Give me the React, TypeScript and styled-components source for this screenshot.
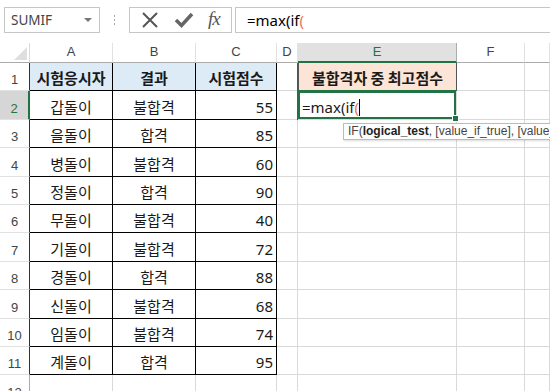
import React from 'react';
import styled, { createGlobalStyle, css } from 'styled-components';

const GREEN = '#217346';
const GRID = '#d9d9d9';

const GlobalStyle = createGlobalStyle`
  html, body {
    margin: 0;
    padding: 0;
    background: #ffffff;
    width: 550px;
    height: 391px;
    overflow: hidden;
    font-family: 'Noto Sans CJK KR', 'Noto Sans', sans-serif;
  }
`;

const Page = styled.div`
  width: 550px;
  height: 391px;
  overflow: hidden;
  background: #fff;
`;

const FormulaBar = styled.div`
  display: flex;
  align-items: stretch;
  height: 26px;
  padding: 7px 0 0 4px;
  margin-bottom: 10px;
`;

const NameBox = styled.div`
  width: 96px;
  box-sizing: border-box;
  border: 1px solid #c6c6c6;
  display: flex;
  align-items: center;
  justify-content: space-between;
  padding: 0 7px 0 6px;
  font-family: 'Noto Sans', 'Open Sans', sans-serif;
  font-size: 13.5px;
  color: #444;
`;

const DropArrow = styled.span`
  width: 0;
  height: 0;
  border-left: 4px solid transparent;
  border-right: 4px solid transparent;
  border-top: 4px solid #777;
`;

const Grip = styled.div`
  width: 29px;
  display: flex;
  flex-direction: column;
  align-items: center;
  justify-content: center;
  gap: 2px;
  span {
    width: 1px;
    height: 2px;
    background: #a6a6a6;
  }
`;

const FxBox = styled.div`
  width: 103px;
  box-sizing: border-box;
  border: 1px solid #c6c6c6;
  display: flex;
  align-items: center;
  justify-content: space-around;
  padding: 0 4px;
`;

const FxText = styled.span`
  font-family: 'Liberation Serif', 'DejaVu Serif', serif;
  font-style: italic;
  font-size: 19px;
  color: #555;
  letter-spacing: -1px;
  margin-top: -2px;
`;

const FormulaInput = styled.div`
  flex: 1;
  margin-left: 3px;
  box-sizing: border-box;
  border: 1px solid #c6c6c6;
  border-right: none;
  display: flex;
  align-items: center;
  padding-left: 11px;
  font-family: 'Noto Sans', 'Open Sans', sans-serif;
  font-size: 15px;
  color: #000;
`;

const Paren = styled.span`
  color: #e8735a;
`;

const Sheet = styled.div`
  display: grid;
  grid-template-columns: 30px 83px 83px 81px 21px 159px 68px 1fr;
  grid-template-rows: 20px repeat(12, 28.4px);
`;

const Corner = styled.div`
  box-sizing: border-box;
  border-right: 1px solid #dadada;
  border-bottom: 1px solid #ababab;
  display: flex;
  justify-content: flex-end;
  align-items: flex-end;
  padding: 0 2px 2px 0;
`;

const Triangle = styled.span`
  width: 0;
  height: 0;
  border-left: 13px solid transparent;
  border-bottom: 13px solid #dfdfdf;
`;

const ColHead = styled.div<{ $active?: boolean }>`
  box-sizing: border-box;
  border-right: 1px solid #e1e1e1;
  border-bottom: 1px solid #ababab;
  display: flex;
  align-items: center;
  justify-content: center;
  padding-bottom: 2px;
  font-family: 'Liberation Sans', Arial, sans-serif;
  font-size: 13px;
  color: #444;
  ${(p) =>
    p.$active &&
    css`
      background: #e1e1e1;
      color: ${GREEN};
      border-bottom: 2px solid ${GREEN};
      border-right-color: #ababab;
    `}
`;

const RowHead = styled.div<{ $active?: boolean; $edge?: boolean }>`
  box-sizing: border-box;
  border-right: 1px solid ${(p) => (p.$edge ? '#333' : '#ababab')};
  border-bottom: 1px solid #e1e1e1;
  display: flex;
  align-items: flex-end;
  justify-content: center;
  padding-bottom: 2px;
  font-family: 'Liberation Sans', Arial, sans-serif;
  font-size: 13px;
  line-height: 16px;
  color: #444;
  ${(p) =>
    p.$active &&
    css`
      background: #d6d6d6;
      color: ${GREEN};
      border-right: 2px solid ${GREEN};
    `}
`;

type Align = 'left' | 'center' | 'right';

const Cell = styled.div<{ $align?: Align; $boxed?: boolean; $fill?: string; $bold?: boolean }>`
  position: relative;
  box-sizing: border-box;
  border-right: 1px solid ${(p) => (p.$boxed ? '#000' : GRID)};
  border-bottom: 1px solid ${(p) => (p.$boxed ? '#000' : GRID)};
  background: ${(p) => p.$fill || 'transparent'};
  display: flex;
  align-items: flex-end;
  justify-content: ${(p) =>
    p.$align === 'right' ? 'flex-end' : p.$align === 'center' ? 'center' : 'flex-start'};
  padding: 0 3px 2px;
  font-size: 15px;
  line-height: 20px;
  font-weight: ${(p) => (p.$bold ? 700 : 400)};
  color: #1a1a1a;
  white-space: nowrap;
`;

const Num = styled.span`
  font-family: 'Noto Sans', 'Open Sans', sans-serif;
  font-size: 15px;
`;

const TitleCell = styled(Cell)`
  border: 1px solid #555;
  border-top: none;
  box-shadow: -1px 0 0 #555;
`;

const ActiveCell = styled(Cell)`
  box-shadow: inset 0 0 0 2px ${GREEN}, -1px 0 0 ${GREEN}, 0 -1px 0 ${GREEN};
  padding-left: 4px;
  font-family: 'Noto Sans', 'Open Sans', sans-serif;
  font-size: 15px;
  z-index: 2;
`;

const Caret = styled.span`
  display: inline-block;
  width: 1px;
  height: 17px;
  background: #000;
  margin-bottom: 1px;
`;

const Handle = styled.span`
  position: absolute;
  right: -3px;
  bottom: -3px;
  width: 5px;
  height: 5px;
  background: ${GREEN};
  border: 1px solid #fff;
`;

const Tooltip = styled.div`
  position: absolute;
  left: 45px;
  top: 32px;
  height: 17px;
  box-sizing: border-box;
  padding: 0 4px;
  background: #fff;
  border: 1px solid #bcbcbc;
  box-shadow: 1px 1px 2px rgba(0, 0, 0, 0.15);
  font-family: 'Liberation Sans', Arial, sans-serif;
  font-size: 12px;
  line-height: 15px;
  color: #444;
  white-space: nowrap;
  b {
    font-weight: 700;
    color: #222;
  }
`;

const people = [
  ['갑돌이', '불합격', 55],
  ['을돌이', '합격', 85],
  ['병돌이', '불합격', 60],
  ['정돌이', '합격', 90],
  ['무돌이', '불합격', 40],
  ['기돌이', '불합격', 72],
  ['경돌이', '합격', 88],
  ['신돌이', '불합격', 68],
  ['임돌이', '불합격', 74],
  ['계돌이', '합격', 95],
] as const;

const HEAD_FILL = '#ddebf7';

function CrossIcon() {
  return (
    <svg width="18" height="18" viewBox="0 0 18 18">
      <path d="M2 2 L16 16 M16 2 L2 16" stroke="#555" strokeWidth="2" fill="none" />
    </svg>
  );
}

function CheckIcon() {
  return (
    <svg width="20" height="18" viewBox="0 0 20 18">
      <path d="M2 9 L7.5 14.5 L18 3" stroke="#666" strokeWidth="3.5" fill="none" />
    </svg>
  );
}

function App() {
  const cols = ['A', 'B', 'C', 'D', 'E', 'F', ''];

  const rows: React.ReactNode[] = [];
  for (let r = 1; r <= 12; r++) {
    const inTable = r <= 11;
    rows.push(
      <RowHead key={`h${r}`} $active={r === 2} $edge={inTable}>
        {r}
      </RowHead>
    );
    if (r === 1) {
      rows.push(
        <Cell key="a1" $boxed $fill={HEAD_FILL} $align="center" $bold>시험응시자</Cell>,
        <Cell key="b1" $boxed $fill={HEAD_FILL} $align="center" $bold>결과</Cell>,
        <Cell key="c1" $boxed $fill={HEAD_FILL} $align="center" $bold>시험점수</Cell>,
        <Cell key="d1" />,
        <TitleCell key="e1" $fill="#fce4d6" $align="center" $bold>불합격자 중 최고점수</TitleCell>,
        <Cell key="f1" />,
        <Cell key="g1" />
      );
    } else if (inTable) {
      const [name, result, score] = people[r - 2];
      rows.push(
        <Cell key={`a${r}`} $boxed $align="center">{name}</Cell>,
        <Cell key={`b${r}`} $boxed $align="center">{result}</Cell>,
        <Cell key={`c${r}`} $boxed $align="right"><Num>{score}</Num></Cell>,
        <Cell key={`d${r}`} />
      );
      if (r === 2) {
        rows.push(
          <ActiveCell key="e2">
            =max(if<Paren>(</Paren>
            <Caret />
            <Handle />
            <Tooltip>
              IF(<b>logical_test</b>, [value_if_true], [value_if_false])
            </Tooltip>
          </ActiveCell>
        );
      } else {
        rows.push(<Cell key={`e${r}`} />);
      }
      rows.push(<Cell key={`f${r}`} />, <Cell key={`g${r}`} />);
    } else {
      for (let c = 0; c < 7; c++) rows.push(<Cell key={`x${r}${c}`} />);
    }
  }

  return (
    <Page>
      <GlobalStyle />
      <FormulaBar>
        <NameBox>
          SUMIF
          <DropArrow />
        </NameBox>
        <Grip>
          <span />
          <span />
          <span />
        </Grip>
        <FxBox>
          <CrossIcon />
          <CheckIcon />
          <FxText>fx</FxText>
        </FxBox>
        <FormulaInput>
          =max(if<Paren>(</Paren>
        </FormulaInput>
      </FormulaBar>
      <Sheet>
        <Corner>
          <Triangle />
        </Corner>
        {cols.map((c) => (
          <ColHead key={c || 'g'} $active={c === 'E'}>
            {c}
          </ColHead>
        ))}
        {rows}
      </Sheet>
    </Page>
  );
}

export default App;
